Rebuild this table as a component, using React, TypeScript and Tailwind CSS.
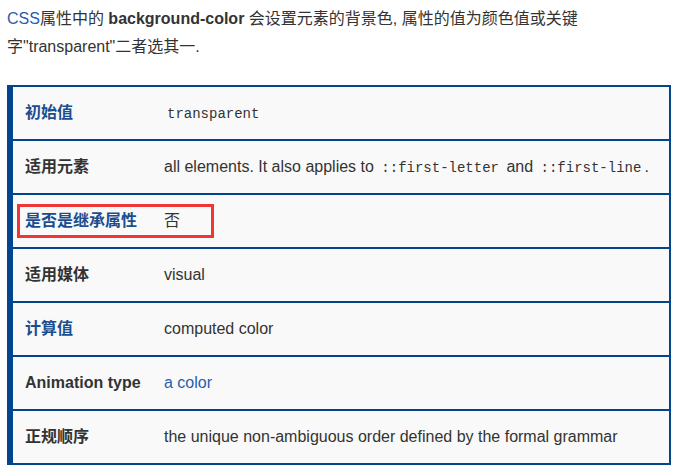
import React from "react"

const font = { fontFamily: '"Liberation Sans", Arial, "Noto Sans CJK SC", sans-serif' }

function Code({ children }: { children: React.ReactNode }) {
    return (
        <code className="px-[3px] text-[14px] text-[#333]" style={{ fontFamily: '"Liberation Mono", "DejaVu Sans Mono", monospace' }}>
            {children}
        </code>
    )
}

interface Row {
    label: string
    link?: boolean
    value: React.ReactNode
}

const rows: Row[] = [
    { label: "初始值", link: true, value: <Code>transparent</Code> },
    {
        label: "适用元素",
        value: (
            <span>
                all elements. It also applies to <Code>::first-letter</Code> and <Code>::first-line</Code>.
            </span>
        ),
    },
    { label: "是否是继承属性", link: true, value: "否" },
    { label: "适用媒体", value: "visual" },
    { label: "计算值", link: true, value: "computed color" },
    { label: "Animation type", value: <span className="text-[#2a5db0]">a color</span> },
    { label: "正规顺序", value: "the unique non-ambiguous order defined by the formal grammar" },
]

export default function App() {
    return (
        <div className="relative min-h-[475px] w-[681px] bg-white text-[16px] text-[#333]" style={font}>
            <p className="px-[7px] pt-[5px] leading-[28px]">
                <span className="text-[#2a5db0]">CSS</span>属性中的 <strong className="font-bold">background-color</strong> 会设置元素的背景色, 属性的值为颜色值或关键
                <br />
                字"transparent"二者选其一.
            </p>

            {/* property table */}
            <div className="mx-[7px] mt-[24px] w-[664px] border-y-2 border-r-2 border-l-[6px] border-[#01458e] bg-[#f9f9f9]">
                {rows.map((row, i) => (
                    <div key={row.label} className={`box-content flex h-[52px] items-center ${i > 0 ? "border-t-2 border-[#01458e]" : ""}`}>
                        <div className={`w-[151px] shrink-0 pl-3 font-bold ${row.link ? "text-[#1a4e8f]" : "text-[#333]"}`}>
                            {row.label}
                        </div>
                        <div className="whitespace-nowrap">{row.value}</div>
                    </div>
                ))}
            </div>

            {/* annotation highlight */}
            <div className="absolute left-[17px] top-[204px] h-[34px] w-[197px] border-[3px] border-[#f03535]" />
        </div>
    )
}
